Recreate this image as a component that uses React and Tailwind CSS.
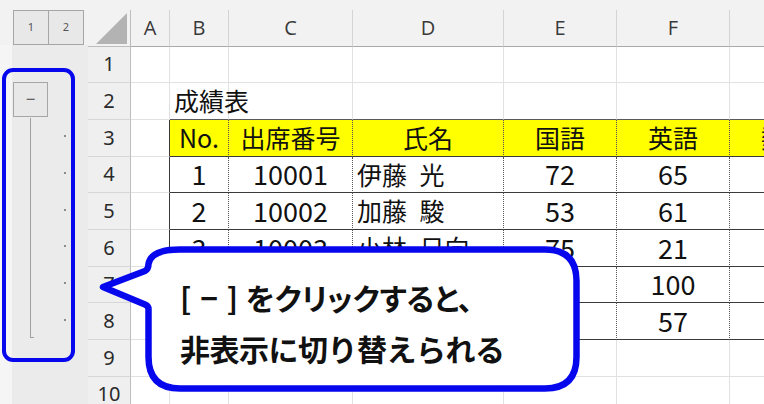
import React from "react";

const COLS = [
  { name: "A", w: "w-[39px]" },
  { name: "B", w: "w-[59px]" },
  { name: "C", w: "w-[124px]" },
  { name: "D", w: "w-[151px]" },
  { name: "E", w: "w-[113px]" },
  { name: "F", w: "w-[113px]" },
  { name: "G", w: "w-[113px]" },
];

const HEAD = ["No.", "出席番号", "氏名", "国語", "英語", "数学"];

const STUDENTS = [
  ["1", "10001", "伊藤\u2002光", "72", "65", "80"],
  ["2", "10002", "加藤\u2002駿", "53", "61", "77"],
  ["3", "10003", "小林\u2002日向", "75", "21", "64"],
  ["4", "10004", "佐藤\u2002陽菜", "88", "100", "92"],
  ["5", "10005", "鈴木\u2002蓮", "60", "57", "45"],
];

const ROWS = [1, 2, 3, 4, 5, 6, 7, 8, 9, 10];

function cellText(r, c) {
  if (r === 2 && c === 1) return "成績表";
  if (r === 3 && c >= 1) return HEAD[c - 1];
  if (r >= 4 && r <= 8 && c >= 1) return STUDENTS[r - 4][c - 1];
  return "";
}

function cellClass(r, c) {
  const inTable = r >= 3 && r <= 8 && c >= 1;
  let cls = "h-full shrink-0 flex items-center border-r border-b whitespace-nowrap ";
  if (inTable) {
    cls += "border-b-[#3a3a3a] border-r-[#555] [border-right-style:dotted] ";
    if (r === 3) cls += "bg-[#ffff00] ";
  } else if (r === 2 && c >= 1) {
    cls += "border-b-[#5a5a5a] border-r-[#e1e1e1] ";
  } else if (c === 0 && r >= 3 && r <= 8) {
    cls += "border-r-[#3a3a3a] border-b-[#e1e1e1] ";
  } else {
    cls += "border-[#e1e1e1] ";
  }
  // names and the title sit left, everything else is centered
  if ((c === 3 && r >= 4) || r === 2) cls += "justify-start pl-[4px] ";
  else cls += "justify-center ";
  // numbers a touch bigger, like the sheet's font
  const numeric = r >= 4 && r <= 8 && c !== 3;
  cls += numeric ? "text-[27px]" : "text-[25px]";
  return cls;
}

function OutlineBar() {
  return (
    <div className="w-[88px] shrink-0 flex flex-col">
      {/* level buttons */}
      <div className="h-[46.67px] bg-[#f2f2f2] pt-[10px] pl-[13px] flex">
        {["1", "2"].map((n) => (
          <div
            key={n}
            className="w-[36px] h-[35px] -mr-px bg-[#e8e8e8] border border-[#a6a6a6] flex items-center justify-center text-[11px] text-[#555] font-['Noto_Sans',sans-serif]"
          >
            {n}
          </div>
        ))}
      </div>
      <div className="flex flex-1">
        <div className="w-[12px] bg-[#f5f5f5]" />
        <div className="flex-1 bg-[#ebebeb] flex flex-col">
          {ROWS.map((r) => (
            <div key={r} className="h-[36.67px] shrink-0 relative flex">
              {r === 2 && (
                <div className="w-[35px] h-[35px] mt-[0.5px] ml-px bg-[#e8e8e8] border border-[#a6a6a6] flex items-center justify-center pb-[2px] text-[17px] text-[#444] font-['Noto_Sans',sans-serif]">
                  −
                </div>
              )}
              {r >= 3 && r <= 8 && (
                <>
                  <div
                    className={`ml-[18px] w-[4px] h-full border-l border-[#a0a0a0] ${
                      r === 8 ? "border-b h-[36px]" : ""
                    }`}
                  />
                  <div className="absolute left-[52px] top-[17px] w-[2px] h-[2px] bg-[#8a8a8a]" />
                </>
              )}
            </div>
          ))}
        </div>
      </div>
    </div>
  );
}

function Sheet() {
  return (
    <div className="flex-1 flex flex-col">
      {/* column letters */}
      <div className="h-[46.67px] shrink-0 bg-[#f2f2f2] pt-[10px] flex">
        <div className="w-[43px] shrink-0 h-full border-r border-b border-[#bdbdbd] relative">
          <svg className="absolute right-[3px] bottom-[2px]" width="31" height="31" viewBox="0 0 31 31">
            <polygon points="0,31 31,31 31,0" fill="#b3b3b3" />
          </svg>
        </div>
        {COLS.map((col) => (
          <div
            key={col.name}
            className={`${col.w} shrink-0 h-full border-r border-b border-r-[#d4d4d4] border-b-[#a9a9a9] flex items-center justify-center text-[20px] text-[#3a3a3a] font-['Open_Sans',sans-serif]`}
          >
            {col.name}
          </div>
        ))}
      </div>

      {ROWS.map((r) => (
        <div key={r} className="h-[36.67px] shrink-0 flex bg-white">
          <div className="w-[43px] shrink-0 h-full bg-[#efefef] border-r border-b border-r-[#bdbdbd] border-b-[#d6d6d6] flex items-center justify-center text-[20px] text-[#2a2a2a] font-['Noto_Sans',sans-serif]">
            {r}
          </div>
          {COLS.map((col, c) => (
            <div
              key={col.name}
              className={`${col.w} ${cellClass(r, c)} text-[#111] font-['Noto_Sans_CJK_JP',sans-serif]`}
            >
              {cellText(r, c)}
            </div>
          ))}
        </div>
      ))}
    </div>
  );
}

function Callout() {
  return (
    <>
      <svg className="absolute left-0 top-0" width="764" height="404" viewBox="0 0 764 404">
        <path
          d="M180 249.5 H545 Q576.5 249.5 576.5 281 V357 Q576.5 388.5 545 388.5 H180 Q148.5 388.5 148.5 357 V309 Q148.5 306 145 304.5 L103 287 L145 271 Q148.5 269 148.5 264 Q151 249.5 180 249.5 Z"
          fill="#ffffff"
          stroke="#0707ee"
          strokeWidth="6.5"
          strokeLinejoin="round"
        />
      </svg>
      <div className="absolute left-[180px] top-[272px] font-['Noto_Sans_CJK_JP',sans-serif] font-bold text-[30px] leading-[51px] text-[#111] whitespace-nowrap">
        <div className="[font-feature-settings:'palt']">
          <span className="tracking-[1px]">[ − ]</span> をクリックすると、
        </div>
        <div className="-tracking-[0.5px]">非表示に切り替えられる</div>
      </div>
    </>
  );
}

export default function App() {
  return (
    <div className="w-[764px] h-[404px] overflow-hidden relative bg-white flex">
      <OutlineBar />
      <Sheet />

      {/* frame around the outline bar */}
      <div className="absolute left-[2px] top-[68px] w-[73px] h-[294px] border-[4px] border-[#0707ee] rounded-[11px]" />

      <Callout />
    </div>
  );
}
